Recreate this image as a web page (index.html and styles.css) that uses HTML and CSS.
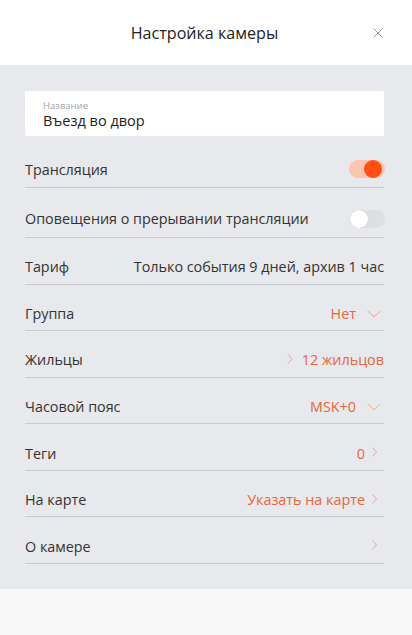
FILE: index.html
```html
<!DOCTYPE html>
<html lang="ru">
<head>
<meta charset="utf-8">
<title>Настройка камеры</title>
<link rel="stylesheet" href="styles.css">
</head>
<body>
<div class="page">
  <header class="header">
    <h1 class="title">Настройка камеры</h1>
    <button class="close" aria-label="Закрыть">
      <svg width="10" height="10" viewBox="0 0 10 10"><path d="M0.5 0.5L9.5 9.5M9.5 0.5L0.5 9.5" stroke="#9a9a9a" stroke-width="1" fill="none"/></svg>
    </button>
  </header>
  <main class="content">
    <div class="field">
      <div class="field-label">Название</div>
      <div class="field-value">Въезд во двор</div>
    </div>
    <div class="row row-switch row-first">
      <span class="label">Трансляция</span>
      <span class="switch on"><span class="knob"></span></span>
    </div>
    <div class="row row-switch row-second">
      <span class="label">Оповещения о прерывании трансляции</span>
      <span class="switch"><span class="knob"></span></span>
    </div>
    <div class="row">
      <span class="label">Тариф</span>
      <span class="value dark">Только события 9 дней, архив 1 час</span>
    </div>
    <div class="row">
      <span class="label">Группа</span>
      <span class="value">Нет<svg class="icon down" width="14" height="8" viewBox="0 0 14 8"><path d="M0.5 0.8L7 6.8L13.5 0.8" stroke="#eaaa92" stroke-width="1" fill="none"/></svg></span>
    </div>
    <div class="row">
      <span class="label">Жильцы</span>
      <span class="value"><svg class="icon right lead" width="14" height="10" viewBox="0 0 14 10"><path d="M5 0.5L9 5L5 9.5" stroke="#eaaa92" stroke-width="1" fill="none"/></svg>12 жильцов</span>
    </div>
    <div class="row">
      <span class="label">Часовой пояс</span>
      <span class="value">MSK+0<svg class="icon down" width="14" height="8" viewBox="0 0 14 8"><path d="M0.5 0.8L7 6.8L13.5 0.8" stroke="#eaaa92" stroke-width="1" fill="none"/></svg></span>
    </div>
    <div class="row">
      <span class="label">Теги</span>
      <span class="value">0<svg class="icon right trail" width="14" height="10" viewBox="0 0 14 10"><path d="M4.5 0.5L8.5 5L4.5 9.5" stroke="#eaaa92" stroke-width="1" fill="none"/></svg></span>
    </div>
    <div class="row">
      <span class="label">На карте</span>
      <span class="value">Указать на карте<svg class="icon right trail" width="14" height="10" viewBox="0 0 14 10"><path d="M4.5 0.5L8.5 5L4.5 9.5" stroke="#eaaa92" stroke-width="1" fill="none"/></svg></span>
    </div>
    <div class="row">
      <span class="label">О камере</span>
      <span class="value"><svg class="icon right trail" width="14" height="10" viewBox="0 0 14 10"><path d="M4.5 0.5L8.5 5L4.5 9.5" stroke="#eaaa92" stroke-width="1" fill="none"/></svg></span>
    </div>
  </main>
  <footer class="footer"></footer>
</div>
</body>
</html>
```

FILE: styles.css
```css
* { box-sizing: border-box; }
html, body { margin: 0; padding: 0; }
body {
  font-family: "Open Sans", "Noto Sans", sans-serif;
  color: #333;
  background: #f9f9f9;
  width: 412px;
  height: 635px;
  overflow: hidden;
}
.page { display: flex; flex-direction: column; height: 635px; }
.header {
  height: 65px;
  background: #fff;
  display: flex;
  align-items: center;
  justify-content: center;
  position: relative;
  flex: none;
}
.title {
  margin: 0;
  font-size: 16.1px;
  font-weight: 400;
  color: #222;
  line-height: 22px;
  margin-right: 3px;
}
.close {
  position: absolute;
  right: 29px;
  top: 28px;
  width: 10px;
  height: 10px;
  padding: 0;
  border: 0;
  background: none;
  display: block;
}
.close svg { display: block; }
.content {
  background: #e8e9ec;
  padding: 26px 28px 0 25px;
  flex: none;
  height: 524px;
}
.field {
  background: #fff;
  height: 45px;
  padding: 8px 18px 0 18px;
  border-radius: 2px;
}
.field-label {
  font-size: 9.5px;
  line-height: 13px;
  color: #a3a3a3;
}
.field-value {
  font-size: 14.5px;
  line-height: 18px;
  color: #222;
}
.row {
  display: flex;
  align-items: center;
  justify-content: space-between;
  height: 46.57px;
  padding-top: 12px;
  border-bottom: 1px solid #c9cbcf;
  font-size: 14.35px;
}
.row-first { height: 52px; padding-top: 15px; }
.row-second { height: 50px; padding-top: 12px; }
.label { color: #333; white-space: nowrap; }
.value {
  display: flex;
  align-items: center;
  color: #e5663c;
  white-space: nowrap;
}
.value.dark { color: #333; }
.icon { display: block; flex: none; }
.icon.down { margin-left: 11px; margin-right: 3px; margin-top: 1px; }
.icon.right.trail { margin-left: 3px; margin-right: 2px; margin-top: -2px; }
.icon.right.lead { margin-right: 5px; margin-top: -2px; }
.switch {
  position: relative;
  width: 36px;
  height: 18px;
  border-radius: 9px;
  background: #dedfe1;
  flex: none;
  margin-right: -1px;
}
.switch .knob {
  position: absolute;
  top: 0;
  left: 1px;
  width: 18px;
  height: 18px;
  border-radius: 50%;
  background: #fff;
  box-shadow: 0 0 1px rgba(0,0,0,0.12);
}
.switch.on { background: #fdc4b0; }
.switch.on .knob { left: 15px; background: #ff4f14; box-shadow: none; }
.footer { flex: 1; background: #f9f9f9; }
```
